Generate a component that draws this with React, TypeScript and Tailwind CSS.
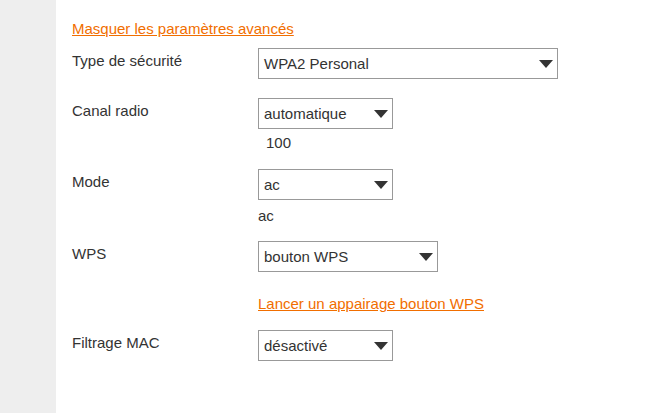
const Caret = () => (
  <svg width="14" height="8" viewBox="0 0 14 8" className="shrink-0">
    <polygon points="0,0 14,0 7,8" fill="#333333" />
  </svg>
);

const Select = ({ value, width }: { value: string; width: string }) => (
  <div
    className={`${width} h-[31px] border border-[#999999] bg-white flex items-center justify-between pl-[5px] pr-[4px]`}
  >
    <span className="leading-5">{value}</span>
    <Caret />
  </div>
);

const Row = ({
  label,
  children,
  className = "",
}: {
  label: string;
  children: React.ReactNode;
  className?: string;
}) => (
  <div className={`flex ${className}`}>
    <div className="w-[186px] shrink-0 pt-[3px] leading-5">{label}</div>
    <div className="flex flex-col">{children}</div>
  </div>
);

const App = () => {
  return (
    <div
      className="flex w-[671px] h-[413px] bg-white text-[15px] text-[#333333]"
      style={{ fontFamily: '"Liberation Sans", Arial, sans-serif' }}
    >
      <div className="w-[56px] shrink-0 bg-[#eeeeee]" />
      <div className="flex flex-col pl-4 pt-[19px]">
        <a href="#" className="leading-5 text-[#f16e00] underline mb-[9px] self-start">
          Masquer les paramètres avancés
        </a>
        <Row label="Type de sécurité" className="mb-[19px]">
          <Select value="WPA2 Personal" width="w-[300px]" />
        </Row>
        <Row label="Canal radio" className="mb-4">
          <Select value="automatique" width="w-[135px]" />
          <span className="mt-1 leading-5 pl-2">100</span>
        </Row>
        <Row label="Mode" className="mb-[15px]">
          <Select value="ac" width="w-[135px]" />
          <span className="mt-[6px] leading-5">ac</span>
        </Row>
        <Row label="WPS" className="mb-4">
          <Select value="bouton WPS" width="w-[180px]" />
          <a href="#" className="mt-[22px] leading-5 text-[#f16e00] underline self-start">
            Lancer un appairage bouton WPS
          </a>
        </Row>
        <Row label="Filtrage MAC">
          <Select value="désactivé" width="w-[135px]" />
        </Row>
      </div>
    </div>
  );
};

export default App;
